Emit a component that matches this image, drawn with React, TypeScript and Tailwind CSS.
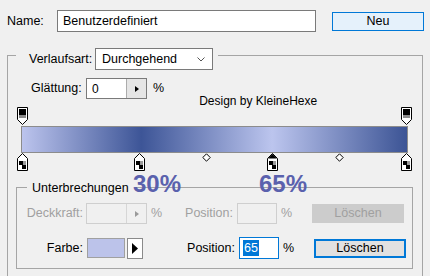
import React from "react";

function TopStop() {
  return (
    <svg width="11" height="19" viewBox="0 0 11 19">
      <path d="M0.5 0.5H10.5V12.5L5.5 17.5L0.5 12.5Z" fill="#fff" stroke="#000" />
      <rect x="2" y="2" width="7" height="6" fill="#000" />
      <rect x="2" y="8" width="7" height="3" fill="#8a8a8a" />
    </svg>
  );
}

function BottomStop({ selected = false }: { selected?: boolean }) {
  return (
    <svg width="11" height="19" viewBox="0 0 11 19">
      <path d="M5.5 0.5L10.5 5.5V17.5H0.5V5.5Z" fill="#fff" stroke="#000" />
      {selected && <path d="M5.5 1L10 5.5H1Z" fill="#000" />}
      <rect x="2" y="8" width="7" height="8" fill="#fff" />
      <rect x="2" y="8" width="4" height="4" fill="#000" />
      <rect x="5" y="12" width="4" height="4" fill="#000" />
      <rect x="6" y="8" width="3" height="4" fill="#9a9a9a" />
    </svg>
  );
}

function Diamond() {
  return (
    <svg width="9" height="9" viewBox="0 0 9 9">
      <path d="M4.5 0.8L8.2 4.5L4.5 8.2L0.8 4.5Z" fill="#fff" stroke="#000" />
    </svg>
  );
}

function SpinInput({ value, disabled = false }: { value?: string; disabled?: boolean }) {
  return (
    <div
      className={`flex w-[61px] h-[21px] border ${
        disabled ? "border-[#cfcfcf] bg-[#f0f0f0]" : "border-[#7a7a7a] bg-white"
      }`}
    >
      <div className="flex-1 pl-[5px] flex items-center">{value}</div>
      <div
        className={`w-[20px] flex items-center justify-center border-l ${
          disabled ? "border-[#d6d6d6] bg-[#f0f0f0]" : "border-[#acacac] bg-[#e5e5e5]"
        }`}
      >
        <svg width="4" height="6" viewBox="0 0 4 6">
          <path d="M0 0L4 3L0 6Z" fill={disabled ? "#9a9a9a" : "#000"} />
        </svg>
      </div>
    </div>
  );
}

export default function App() {
  return (
    <div className="relative w-[430px] h-[276px] overflow-hidden bg-[#f0f0f0] text-[12px] text-black font-['Liberation_Sans',Arial,sans-serif] leading-none">
      {/* Name row */}
      <div className="flex items-center pt-[10px] pl-[7px]">
        <span className="w-[50px] text-[12.5px]">Name:</span>
        <div className="w-[259px] h-[22px] border border-[#7a7a7a] bg-white flex items-center pl-[5px] text-[12.5px]">
          Benutzerdefiniert
        </div>
        <button className="ml-[16px] w-[92px] h-[19px] border border-[#0078d7] bg-[#e5f1fb] text-[12.5px]">
          Neu
        </button>
      </div>

      {/* Outer frame */}
      <div className="ml-[7px] mt-[23px] w-[416px] h-[260px] border-t border-l border-r border-[#a5a5a5]">
        <div className="-mt-[8px] ml-[8px] w-[202px] h-[22px] pl-[13px] bg-[#f0f0f0] flex items-center">
          <span className="w-[66px] text-[12.5px]">Verlaufsart:</span>
          <div className="w-[118px] h-[22px] border border-[#7a7a7a] bg-white flex items-center justify-between pl-[6px] pr-[7px] text-[12.5px]">
            <span>Durchgehend</span>
            <svg width="8" height="5" viewBox="0 0 8 5">
              <path d="M0.5 0.5L4 4L7.5 0.5" fill="none" stroke="#555" />
            </svg>
          </div>
        </div>

        <div className="flex mt-[8px]">
          <div className="flex items-center">
            <span className="ml-[23px] w-[55px] text-[12.5px]">Glättung:</span>
            <SpinInput value="0" />
            <span className="ml-[6px] text-[12.5px]">%</span>
          </div>
          <span className="self-end -mb-[8px] ml-[35px] text-[12px]">Design by KleineHexe</span>
        </div>

        {/* Gradient editor */}
        <div className="mt-[8px]">
          <div className="relative h-[19px]">
            <div className="absolute left-[9px] top-0">
              <TopStop />
            </div>
            <div className="absolute left-[393px] top-0">
              <TopStop />
            </div>
          </div>
          <div className="ml-[13px] w-[387px] h-[27px] border border-[#8c8c8c] bg-[linear-gradient(to_right,#bcc4ed_0%,#3d5597_31%,#bcc5ee_65%,#3c5495_100%)]" />
          <div className="relative h-[19px]">
            <div className="absolute left-[9px] top-0">
              <BottomStop />
            </div>
            <div className="absolute left-[126px] top-0">
              <BottomStop />
            </div>
            <div className="absolute left-[194px] top-[0px]">
              <Diamond />
            </div>
            <div className="absolute left-[259px] top-0">
              <BottomStop selected />
            </div>
            <div className="absolute left-[327px] top-[0px]">
              <Diamond />
            </div>
            <div className="absolute left-[393px] top-0">
              <BottomStop />
            </div>
          </div>
        </div>

        {/* Unterbrechungen */}
        <div className="ml-[8px] mt-[15px] w-[397px] h-[82px] border border-[#a5a5a5]">
          <div className="-mt-[8px] ml-[10px] w-fit h-[16px] px-[5px] bg-[#f0f0f0] flex items-center text-[12.5px]">
            Unterbrechungen
          </div>

          <div className="flex items-center mt-[7px] h-[21px] text-[#a0a0a0] text-[12.5px]">
            <span className="w-[66px] text-right">Deckkraft:</span>
            <div className="ml-[3px]">
              <SpinInput disabled />
            </div>
            <span className="ml-[4px] w-[14px]">%</span>
            <span className="w-[68px] text-right">Position:</span>
            <div className="ml-[4px] w-[40px] h-[21px] border border-[#cfcfcf] bg-[#f0f0f0]" />
            <span className="ml-[4px] w-[14px]">%</span>
            <button className="ml-[17px] w-[92px] h-[19px] bg-[#cccccc] text-[#a0a0a0]">Löschen</button>
          </div>

          <div className="flex items-center mt-[13px] h-[22px] text-[12.5px]">
            <span className="w-[66px] text-right">Farbe:</span>
            <div className="ml-[4px] w-[38px] h-[20px] border border-[#a0a0a0] bg-[#bcc3ea]" />
            <div className="ml-[2px] w-[16px] h-[21px] border border-[#8a8a8a] bg-white flex items-center justify-center">
              <svg width="6" height="11" viewBox="0 0 6 11">
                <path d="M0 0L6 5.5L0 11Z" fill="#000" />
              </svg>
            </div>
            <span className="w-[92px] text-right">Position:</span>
            <div className="ml-[4px] w-[40px] h-[22px] border border-[#0078d7] bg-white flex items-center pl-[3px]">
              <span className="bg-[#0078d7] text-white px-[1px] py-[2px]">65</span>
            </div>
            <span className="ml-[4px] w-[14px]">%</span>
            <button className="ml-[17px] w-[92px] h-[19px] border-2 border-[#0078d7] bg-[#e1e1e1]">Löschen</button>
          </div>
        </div>
      </div>

      {/* Annotations */}
      <span className="absolute left-[133px] top-[172px] text-[24px] font-bold leading-none text-[#5a61ad]">30%</span>
      <span className="absolute left-[259px] top-[172px] text-[24px] font-bold leading-none text-[#5a61ad]">65%</span>
    </div>
  );
}
